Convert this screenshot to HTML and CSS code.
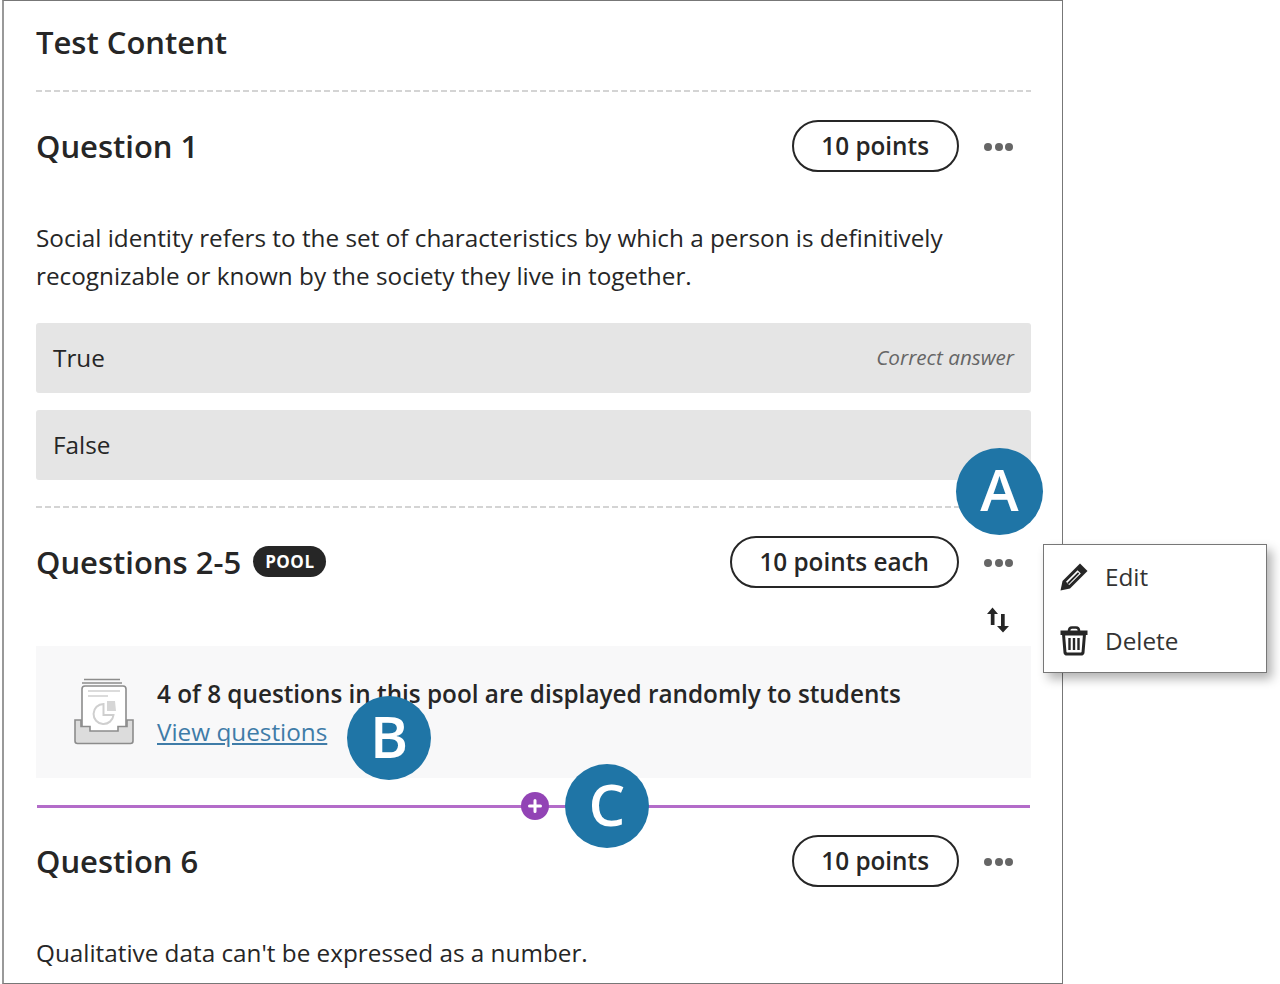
FILE: index.html
```html
<!DOCTYPE html>
<html lang="en">
<head>
    <meta charset="UTF-8">
    <title>Test Content</title>
    <link rel="stylesheet" href="styles.css">
</head>
<body>
    <div class="test-frame">
        <h1 class="test-title">Test Content</h1>
        <div class="dash-line"></div>

        <!-- Question 1 -->
        <div class="question-head first-head">
            <h2 class="question-title">Question 1</h2>
            <span class="points-pill">10 points</span>
            <span class="more-btn"><i></i><i></i><i></i></span>
        </div>
        <p class="question-text">Social identity refers to the set of characteristics by which a person is definitively recognizable or known by the society they live in together.</p>
        <div class="answer-row">
            <span>True</span>
            <em class="correct-note">Correct answer</em>
        </div>
        <div class="answer-row">
            <span>False</span>
        </div>
        <div class="dash-line second-line"></div>

        <!-- Pool -->
        <div class="question-head pool-head">
            <h2 class="question-title">Questions 2-5</h2>
            <span class="pool-badge">POOL</span>
            <span class="points-pill">10 points each</span>
            <span class="more-btn"><i></i><i></i><i></i></span>
        </div>
        <div class="sort-row">
            <svg class="sort-icon" width="24" height="26" viewBox="0 0 24 26">
                <path d="M6.5 0.5 L12 7 H8.5 V18 H4.8 V7 H1 Z" fill="#262626"/>
                <path d="M15 7 H18.7 V19 H23 L17 25.5 L11 19 H15 Z" fill="#262626"/>
            </svg>
        </div>
        <div class="pool-box">
            <svg class="pool-icon" width="60" height="68" viewBox="0 0 60 68">
                <path d="M10 1.5 H46 M8 5 H48" stroke="#8c8c8c" stroke-width="1.6" fill="none"/>
                <rect x="8" y="8" width="44" height="48" rx="3" fill="#fff" stroke="#8c8c8c" stroke-width="1.6"/>
                <path d="M14 13 H46 M14 18 H34" stroke="#cfcfcf" stroke-width="1.6" fill="none"/>
                <path d="M29.5 26 A10 10 0 1 0 39.5 37 H29.5 Z" fill="none" stroke="#cfcfcf" stroke-width="2"/>
                <path d="M33 23 L41 23 L42 33 L33 33 Z" fill="#d6d6d6"/>
                <path d="M1 42 V63 Q1 65.5 3.5 65.5 H56.5 Q59 65.5 59 63 V42 H53 V48.5 H44 V53 H16 V48.5 H7 V42 Z" fill="#dcdcdc" stroke="#8c8c8c" stroke-width="1.6"/>
            </svg>
            <div class="pool-info">
                <div class="pool-text">4 of 8 questions in this pool are displayed randomly to students</div>
                <a class="pool-link" href="#">View questions</a>
            </div>
        </div>
        <div class="insert-line">
            <span class="insert-btn">
                <svg width="16" height="16" viewBox="0 0 16 16"><path d="M8 2.5 V13.5 M2.5 8 H13.5" stroke="#fff" stroke-width="3" stroke-linecap="round"/></svg>
            </span>
        </div>

        <!-- Question 6 -->
        <div class="question-head six-head">
            <h2 class="question-title">Question 6</h2>
            <span class="points-pill">10 points</span>
            <span class="more-btn"><i></i><i></i><i></i></span>
        </div>
        <p class="question-text">Qualitative data can't be expressed as a number.</p>
    </div>

    <!-- Menu -->
    <div class="item-menu">
        <div class="menu-item">
            <svg width="30" height="30" viewBox="0 0 30 30">
                <path d="M21 1.5 L28.5 9 L11 26.5 L1.5 28.5 L3.5 19 Z" fill="#262626"/>
                <path d="M7 19.8 L18.6 8.2 L21.8 11.4 L10.2 23 Z" fill="#fff"/>
                <path d="M9 21.5 L19.6 10.8" stroke="#262626" stroke-width="1.8"/>
            </svg>
            <span>Edit</span>
        </div>
        <div class="menu-item">
            <svg width="30" height="30" viewBox="0 0 30 30">
                <path d="M10 5 Q10 1.5 13 1.5 H17 Q20 1.5 20 5" fill="none" stroke="#262626" stroke-width="2.6"/>
                <path d="M1.5 4.5 H28.5 V9 H1.5 Z" fill="#262626"/>
                <path d="M4.5 8 H25.5 L24 26.5 Q23.8 28 22 28 H8 Q6.2 28 6 26.5 Z" fill="none" stroke="#262626" stroke-width="3"/>
                <path d="M10.5 12 V24 M15 12 V24 M19.5 12 V24" stroke="#262626" stroke-width="2.4"/>
            </svg>
            <span>Delete</span>
        </div>
    </div>

    <!-- Callouts -->
    <div class="callout callout-a">A</div>
    <div class="callout callout-b">B</div>
    <div class="callout callout-c">C</div>
</body>
</html>
```

FILE: styles.css
```css
body, html {
    margin: 0;
    padding: 0;
    height: 984px;
    overflow: hidden;
    background-color: #fff;
    font-family: 'Open Sans', sans-serif;
    color: #262626;
}

.test-frame {
    box-sizing: border-box;
    width: 1061px;
    height: 984px;
    margin-left: 2px;
    padding: 0 31px 0 32px;
    border: 1px solid #777;
    border-left: 2px solid #999;
    overflow: hidden;
}

.test-title {
    margin: 0;
    padding-top: 20px;
    font-size: 31px;
    line-height: 42px;
    font-weight: 600;
}

.dash-line {
    margin-top: 27px;
    height: 2px;
    background: repeating-linear-gradient(90deg, #d4d4d4 0, #d4d4d4 6px, transparent 6px, transparent 9px);
}

.second-line {
    margin-top: 26px;
}

.question-head {
    display: flex;
    align-items: center;
    height: 52px;
}

.first-head {
    margin-top: 28px;
}

.pool-head {
    margin-top: 28px;
}

.six-head {
    margin-top: 27px;
}

.question-title {
    margin: 0;
    font-size: 31px;
    font-weight: 600;
    line-height: 42px;
}

.pool-badge {
    margin: -2px 0 0 12px;
    padding: 0 12px;
    height: 31px;
    line-height: 31px;
    border-radius: 16px;
    background-color: #262626;
    color: #fff;
    font-size: 17px;
    font-weight: 700;
    letter-spacing: 0.5px;
}

.points-pill {
    box-sizing: border-box;
    height: 52px;
    margin-left: auto;
    padding: 0 27.5px;
    line-height: 48px;
    border: 2px solid #262626;
    border-radius: 26px;
    font-size: 24.3px;
    font-weight: 600;
}

.more-btn {
    display: flex;
    gap: 2.5px;
    width: 30px;
    margin: 2px 17px 0 25.5px;
}

.more-btn i {
    width: 8px;
    height: 8px;
    border-radius: 50%;
    background-color: #666;
}

.question-text {
    margin: 47px 0 0;
    font-size: 24.3px;
    line-height: 38px;
}

.answer-row {
    box-sizing: border-box;
    display: flex;
    justify-content: space-between;
    align-items: center;
    height: 70px;
    margin-top: 17px;
    padding: 0 17px 2px;
    background-color: #e5e5e5;
    border-radius: 3px;
    font-size: 24.3px;
}

.question-text + .answer-row {
    margin-top: 28px;
}

.correct-note {
    font-size: 20.7px;
    color: #666;
}

.sort-row {
    display: flex;
    justify-content: flex-end;
    padding: 19px 21px 0 0;
    height: 39px;
}

.pool-box {
    display: flex;
    align-items: center;
    gap: 23px;
    height: 132px;
    padding-left: 38px;
    background-color: #f8f8f9;
}

.pool-icon {
    flex-shrink: 0;
}

.pool-info {
    padding-top: 2px;
}

.pool-text {
    font-size: 24.3px;
    font-weight: 600;
    line-height: 38px;
}

.pool-link {
    display: block;
    font-size: 24.3px;
    line-height: 38px;
    color: #3f7ca8;
}

.insert-line {
    position: relative;
    margin: 27px 1px 0;
    height: 3px;
    background-color: #b36cc9;
}

.insert-btn {
    position: absolute;
    left: 484px;
    top: -13px;
    display: flex;
    align-items: center;
    justify-content: center;
    width: 28px;
    height: 28px;
    border-radius: 50%;
    background-color: #9244b5;
}

.item-menu {
    position: absolute;
    left: 1043px;
    top: 544px;
    box-sizing: border-box;
    width: 224px;
    height: 129px;
    background-color: #fff;
    border: 1px solid #777;
    box-shadow: 5px 6px 10px rgba(0, 0, 0, 0.3);
}

.menu-item {
    box-sizing: border-box;
    display: flex;
    align-items: center;
    gap: 16px;
    height: 64px;
    padding: 0 0 2px 15px;
    font-size: 24.3px;
    color: #333;
}

.menu-item svg {
    margin-top: 1px;
}

.callout {
    position: absolute;
    box-sizing: border-box;
    display: flex;
    align-items: center;
    justify-content: center;
    width: 84px;
    height: 84px;
    padding-bottom: 6px;
    border-radius: 50%;
    background-color: #1f75a6;
    color: #fff;
    font-size: 58px;
    font-weight: 600;
}

.callout-a {
    left: 956px;
    top: 448px;
    width: 87px;
    height: 87px;
}

.callout-b {
    left: 347px;
    top: 696px;
}

.callout-c {
    left: 565px;
    top: 764px;
}
```
